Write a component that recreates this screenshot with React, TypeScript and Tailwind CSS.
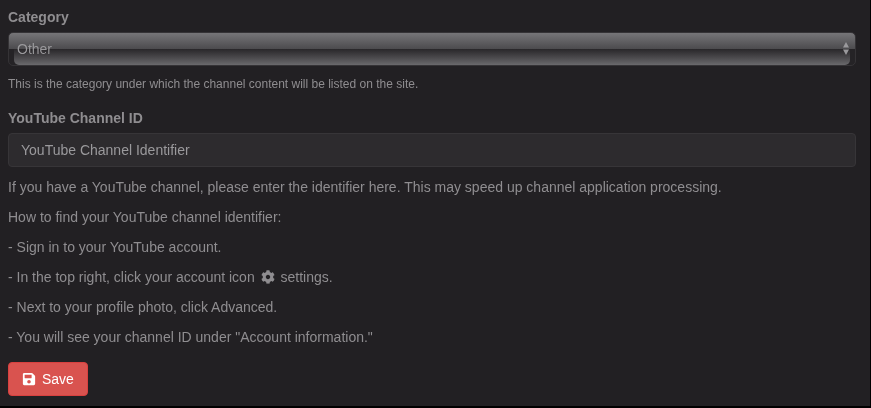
import { FaCog, FaSave } from "react-icons/fa";

export default function App() {
  return (
    <div className="min-h-screen bg-black font-['Liberation_Sans',Arial,sans-serif] text-sm leading-5 text-[#8f8d90]">
      <div className="mr-px bg-[#222023] px-2 pt-[7px] pb-2.5">
        <form className="mr-1.5 flex flex-col items-start">
          {/* Category */}
          <label htmlFor="category" className="font-bold">
            Category
          </label>
          <div className="relative mt-[5px] w-full">
            <select
              id="category"
              className="h-[34px] w-full appearance-none rounded-[5px] border border-[#353336] bg-[#252326] bg-[image:linear-gradient(#767578,#4c4b4e)] bg-[length:100%_16px] bg-no-repeat px-2 text-sm text-[#9a999c]"
            >
              <option>Other</option>
            </select>
            {/* Lower half of the glossy button face */}
            <div className="pointer-events-none absolute inset-x-1.5 bottom-px flex h-4 items-center rounded-b-[5px] bg-linear-to-b from-[#29272a] to-[#6a696c] mix-blend-lighten" />
            <svg
              viewBox="0 0 8 13"
              className="pointer-events-none absolute top-2.5 right-1.5 h-[13px] w-2 fill-[#9a999c]"
              aria-hidden="true"
            >
              <path d="M4 0 7 5.5H1zM1 7.5h6L4 13z" />
            </svg>
          </div>
          <p className="mt-2 text-xs leading-5">
            This is the category under which the channel content will be listed on the site.
          </p>

          {/* YouTube channel */}
          <label htmlFor="channel-id" className="mt-3.5 font-bold">
            YouTube Channel ID
          </label>
          <input
            id="channel-id"
            type="text"
            placeholder="YouTube Channel Identifier"
            className="mt-[5px] h-[34px] w-full rounded border border-[#373538] bg-[#2d2b2e] px-3 text-sm placeholder:text-[#9a999c]"
          />
          <div className="mt-2.5 flex flex-col gap-2.5">
            <p>
              If you have a YouTube channel, please enter the identifier here. This may speed up
              channel application processing.
            </p>
            <p>How to find your YouTube channel identifier:</p>
            <p>- Sign in to your YouTube account.</p>
            <p>
              - In the top right, click your account icon{" "}
              <FaCog className="mx-0.5 inline size-3.5 align-[-2px]" /> settings.
            </p>
            <p>- Next to your profile photo, click Advanced.</p>
            <p>- You will see your channel ID under "Account information."</p>
          </div>

          <button
            type="button"
            className="mt-[15px] flex h-[34px] items-center gap-1.5 rounded border border-[#d9403f] bg-[#d9534f] px-[13px] text-white"
          >
            <FaSave className="size-3.5" />
            Save
          </button>
        </form>
      </div>
    </div>
  );
}
